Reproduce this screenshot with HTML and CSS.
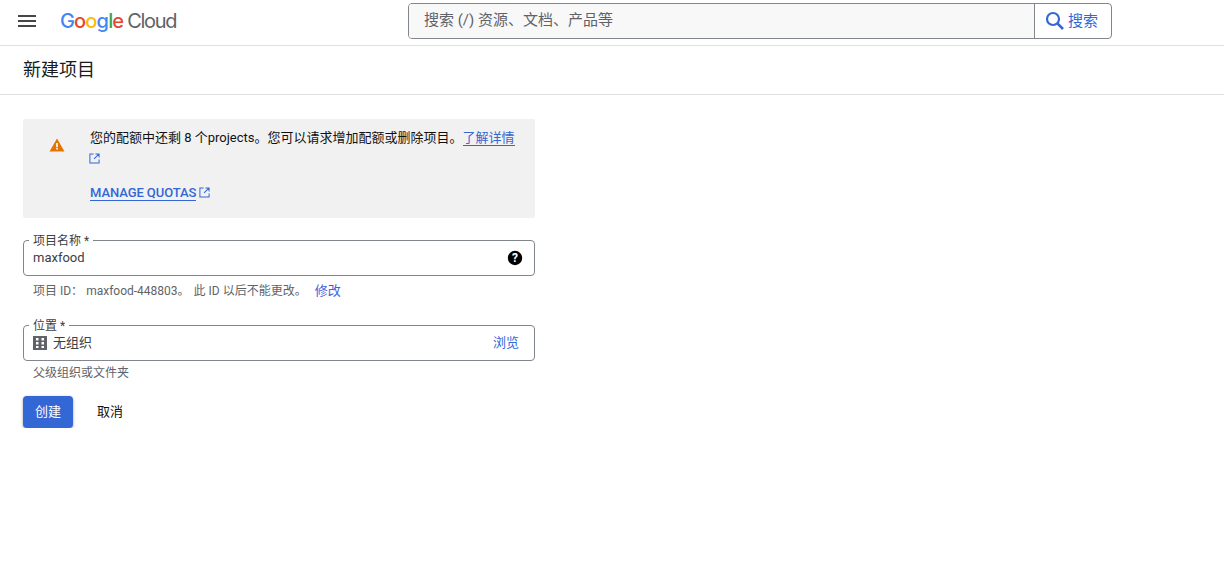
FILE: index.html
```html
<!DOCTYPE html>
<html lang="zh-CN">
<head>
<meta charset="utf-8">
<title>新建项目</title>
<link rel="stylesheet" href="styles.css">
</head>
<body>
<header class="topbar">
  <svg class="menu-icon" width="18" height="12" viewBox="0 0 18 12"><path d="M0 0h18v2H0zM0 5h18v2H0zM0 10h18v2H0z" fill="#444746"/></svg>
  <div class="logo"><span class="g-blue">G</span><span class="g-red">o</span><span class="g-yellow">o</span><span class="g-blue">g</span><span class="g-green">l</span><span class="g-red">e</span><span class="logo-cloud">Cloud</span></div>
  <div class="search">
    <div class="search-input">搜索 (/) 资源、文档、产品等</div>
    <div class="search-btn">
      <svg width="20" height="20" viewBox="0 0 20 20"><circle cx="8" cy="8" r="6" fill="none" stroke="#3367d6" stroke-width="2.2"/><path d="M12.4 12.4l5.6 5.6" stroke="#3367d6" stroke-width="2.6" fill="none"/></svg>
      <span>搜索</span>
    </div>
  </div>
</header>
<div class="titlebar"><h1>新建项目</h1></div>
<main class="content">
  <section class="notice">
    <svg class="warn" width="16" height="14" viewBox="0 0 16 14"><path d="M8 0.5L15.5 13.5H0.5z" fill="#e37400"/><path d="M7.2 5h1.6v4.2H7.2zM7.2 10h1.6v1.6H7.2z" fill="#fff"/></svg>
    <div class="notice-body">
      <p class="notice-text">您的配额中还剩 8 个projects。您可以请求增加配额或删除项目。<a class="link" href="#">了解详情</a> <svg class="ext ext-line" width="11" height="11" viewBox="0 0 12 12"><path d="M5 1H1v10h10V7M7 1h4v4M11 1L5.5 6.5" fill="none" stroke="#3367d6" stroke-width="1.1"/></svg></p>
      <p class="notice-action"><a class="link strong" href="#">MANAGE QUOTAS</a><svg class="ext ext-gap" width="11" height="11" viewBox="0 0 12 12"><path d="M5 1H1v10h10V7M7 1h4v4M11 1L5.5 6.5" fill="none" stroke="#3367d6" stroke-width="1.1"/></svg></p>
    </div>
  </section>

  <div class="field first">
    <span class="float-label">项目名称 *</span>
    <span class="field-value">maxfood</span>
    <svg class="help" width="16" height="16" viewBox="0 0 16 16"><circle cx="8" cy="8" r="7.2" fill="#000"/><text class="help-mark" x="8" y="12" text-anchor="middle">?</text></svg>
  </div>
  <p class="hint hint-id"><span>项目 ID：</span><span class="hint-id-value">maxfood-448803。</span><span class="hint-after">此 ID 以后不能更改。</span><a class="edit" href="#">修改</a></p>

  <div class="field second">
    <span class="float-label">位置 *</span>
    <svg class="org" width="14" height="14" viewBox="0 0 14 14"><path fill-rule="evenodd" fill="#5f6368" d="M0 0h14v14H0zM3 2v2.5h2.5V2zM8.5 2v2.5H11V2zM3 6v2.5h2.5V6zM8.5 6v2.5H11V6zM3 10v2h2.5v-2zM8.5 10v2H11v-2z"/></svg>
    <span class="field-value field-value-org">无组织</span>
    <a class="browse" href="#">浏览</a>
  </div>
  <p class="hint hint-parent">父级组织或文件夹</p>

  <div class="actions">
    <button class="btn-primary" type="button">创建</button>
    <button class="btn-text" type="button">取消</button>
  </div>
</main>
</body>
</html>
```

FILE: styles.css
```css
* { box-sizing: border-box; }
html, body { margin: 0; padding: 0; background: #fff; }
body {
  font-family: Roboto, "Noto Sans CJK SC", sans-serif;
  font-size: 13px;
  color: #202124;
  overflow: hidden;
}
a { text-decoration: none; color: #3367d6; }
p { margin: 0; }

.topbar {
  display: flex;
  align-items: center;
  height: 46px;
  padding: 3px 0 6px 18px;
  border-bottom: 1px solid #e0e0e0;
}
.menu-icon { flex: none; }
.logo {
  flex: none;
  width: 348px;
  margin-left: 24px;
  font-family: Inter, Roboto, sans-serif;
  font-size: 20px;
  font-weight: 500;
  letter-spacing: -0.85px;
  line-height: 36px;
  white-space: nowrap;
}
.g-blue { color: #4285f4; }
.g-red { color: #ea4335; }
.g-yellow { color: #fbbc05; }
.g-green { color: #34a853; }
.logo-cloud { color: #5f6368; margin-left: 4px; font-weight: 400; letter-spacing: -1.3px; }

.search {
  display: flex;
  width: 704px;
  height: 36px;
  border: 1px solid #80868b;
  border-radius: 4px;
  overflow: hidden;
}
.search-input {
  flex: 1;
  padding-left: 15px;
  line-height: 33px;
  font-size: 15px;
  color: #5f6368;
  background: #f8f8f8;
}
.search-btn {
  display: flex;
  align-items: center;
  gap: 3px;
  width: 77px;
  padding-left: 10px;
  border-left: 1px solid #80868b;
  color: #3367d6;
  font-size: 15px;
  line-height: 30px;
}

.titlebar {
  height: 49px;
  padding-left: 23px;
  border-bottom: 1px solid #e0e0e0;
}
.titlebar h1 {
  margin: 0;
  font-size: 18px;
  font-weight: 400;
  line-height: 48px;
  color: #1a1a1a;
}

.content { width: 535px; padding: 24px 0 0 23px; }

.notice {
  display: flex;
  height: 99px;
  background: #f1f1f1;
  border-radius: 2px;
  padding: 8px 0 0 27px;
}
.warn { flex: none; margin: 11px 0 0 -1px; }
.notice-body { margin-left: 25px; }
.notice-text { width: 430px; line-height: 21px; color: #111; }
.link { color: #3367d6; border-bottom: 1px solid #3367d6; }
.ext { vertical-align: -1px; }
.ext-line { margin-left: -1px; }
.notice-action { margin-top: 14px; line-height: 20px; }
.strong { font-weight: 500; letter-spacing: -0.08px; }
.ext-gap { margin-left: 3px; }

.field {
  position: relative;
  display: flex;
  align-items: center;
  height: 36px;
  padding: 0 15px 0 9px;
  border: 1px solid #80868b;
  border-radius: 4px;
}
.first { margin-top: 22px; }
.second { margin-top: 26px; }
.float-label {
  position: absolute;
  left: 5px;
  top: -7px;
  padding: 0 4px;
  background: #fff;
  font-size: 12px;
  line-height: 14px;
  color: #3c4043;
}
.field-value { padding-bottom: 2px; color: #3c4043; }
.field-value-org { padding-bottom: 4px; }
.help { margin-left: auto; margin-right: -4px; }
.help-mark { font: 700 12px Roboto, sans-serif; fill: #fff; }
.org { flex: none; margin-right: 6px; }
.browse { margin-left: auto; padding-bottom: 4px; color: #3367d6; }

.hint { font-size: 12px; color: #5f6368; padding-left: 10px; line-height: 16px; }
.hint-id { margin-top: 7px; }
.hint-id-value { margin-left: 3px; color: #5f6368; }
.hint-after { margin-left: 4px; }
.edit { margin-left: 8px; font-size: 13px; color: #3f62d8; }
.hint-parent { margin-top: 4px; }

.actions { display: flex; align-items: center; margin-top: 15px; }
.btn-primary {
  width: 50px;
  height: 32px;
  padding: 0 0 4px;
  border: 0;
  border-radius: 4px;
  background: #3367d6;
  color: #fff;
  font: 400 13px Roboto, "Noto Sans CJK SC", sans-serif;
  box-shadow: 0 1px 3px rgba(60,64,67,.5);
}
.btn-text {
  margin-left: 8px;
  width: 58px;
  height: 32px;
  padding: 0 0 4px;
  border: 0;
  background: transparent;
  color: #111;
  font: 400 13px Roboto, "Noto Sans CJK SC", sans-serif;
}
```
